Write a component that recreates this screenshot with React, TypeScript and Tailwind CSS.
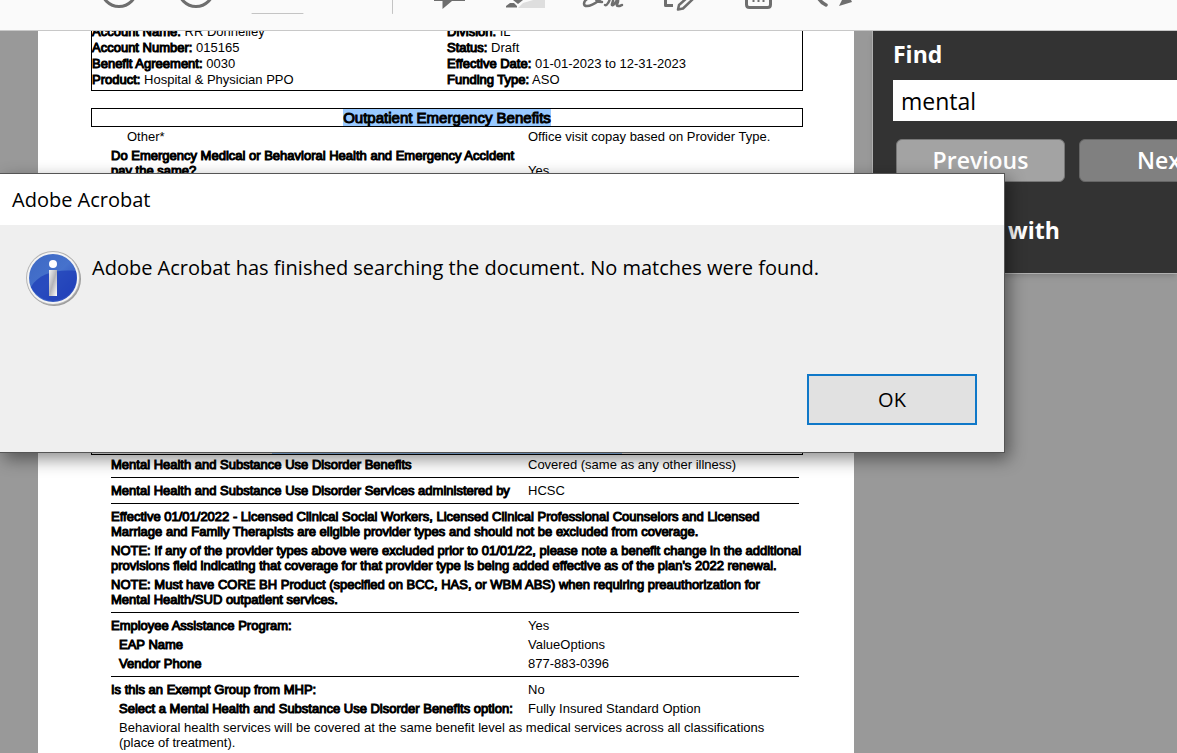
import { ReactNode } from "react";

type RowProps = {
	label: ReactNode;
	value?: string;
	className?: string;
	plain?: boolean;
};

const heavy = "[-webkit-text-stroke:1px_black]";

const accountInfo = [
	{ label: "Account Name:", value: "RR Donnelley" },
	{ label: "Division:", value: "IL" },
	{ label: "Account Number:", value: "015165" },
	{ label: "Status:", value: "Draft" },
	{ label: "Benefit Agreement:", value: "0030" },
	{ label: "Effective Date:", value: "01-01-2023 to 12-31-2023" },
	{ label: "Product:", value: "Hospital & Physician PPO" },
	{ label: "Funding Type:", value: "ASO" },
];

const Row = ({ label, value, className = "", plain = false }: RowProps) => (
	<div className="grid grid-cols-[417px_1fr] items-end">
		<span className={`${className} ${plain ? "" : heavy}`}>{label}</span>
		<span>{value}</span>
	</div>
);

const Group = ({ children }: { children: ReactNode }) => (
	<section className="flex flex-col gap-1 border-b border-black py-[5px]">{children}</section>
);

// lower halves of the toolbar icons, the bar is scrolled under the window edge
const Toolbar = () => (
	<header className="h-[31px] shrink-0 overflow-hidden border-b border-[#c8c8c8] bg-[#fafafa]">
		<svg
			width="900"
			height="30"
			viewBox="0 0 900 30"
			fill="none"
			stroke="#6e6e6e"
			strokeWidth="3"
			strokeLinecap="round"
			strokeLinejoin="round"
		>
			<circle cx="119" cy="-11" r="17.5" />
			<circle cx="196" cy="-11" r="17.5" />
			<path d="M252 13.5h51M392.5 -1v14.5" stroke="#c4c4c4" strokeWidth="1" />
			<g fill="#6e6e6e" stroke="none">
				<path d="M434 0h31v1H452L442.5 9V1H434z" />
				<path d="M506 7.5V6l4-3h4l3 3v1.500zM513 0h10l-5 4z" />
				<path d="M518 8l5-5 10-3h12v8z" fill="#dedede" />
				<path d="M839 6l3-6h9l1 2z" />
			</g>
			<path d="M587 -1C583 2 583 6 587 6C593 6 598 1 601 -1M596 -2c0 4 2 4 6 4M609 -1c2 0-2 7-4 6M613 -1c1 2-3 7 0 6s4-7 5-5-3 6 0 6 3-1 4-1" strokeWidth="2.5" />
			<path d="M665.5 -2V5.500H673" strokeLinecap="butt" />
			<path d="M688 -3L679 5l-1 4.500 5-1L694 -2" strokeWidth="2.5" />
			<path d="M746.500 -2V4.500Q746.500 7.500 749.500 7.500H767.500Q770.500 7.500 770.500 4.500V-2" />
			<path d="M753.500 -1V2M758.500 -1V2M763.500 -1V2" strokeWidth="2" strokeLinecap="butt" />
			<path d="M818 -3Q820 2 826 5" strokeWidth="3.5" />
		</svg>
	</header>
);

const InfoIcon = () => (
	<svg width="56" height="56" viewBox="0 0 56 56" className="shrink-0" aria-hidden="true">
		<defs>
			<linearGradient id="info-fill" x1="0" y1="0" x2="1" y2="1">
				<stop offset="0" stopColor="#3d68c4" />
				<stop offset="0.5" stopColor="#4672cc" />
				<stop offset="1" stopColor="#2440b8" />
			</linearGradient>
			<linearGradient id="info-stem" x1="0" y1="0" x2="1" y2="1">
				<stop offset="0" stopColor="#f4f4f4" />
				<stop offset="0.5" stopColor="#b4b4b8" />
				<stop offset="1" stopColor="#ffffff" />
			</linearGradient>
		</defs>
		<circle cx="28" cy="28" r="27" fill="#9c9c9c" />
		<circle cx="27" cy="27" r="27" fill="#b4b4b4" />
		<circle cx="27" cy="27" r="26" fill="#f4f4f4" />
		<circle cx="27" cy="27" r="24" fill="url(#info-fill)" />
		<path d="M5 36C12 23 30 18 50 20A24 24 0 0 1 5 36z" fill="#1c3cb8" opacity=".7" />
		<circle cx="27" cy="13" r="4" fill="#fff" />
		<rect x="23" y="19" width="8" height="26" fill="url(#info-stem)" />
	</svg>
);

const DocumentPage = () => (
	<article className="min-h-[722px] w-[816px] shrink-0 bg-white px-[53px] font-['Liberation_Sans',Arial,sans-serif] text-[13px] leading-[15px] whitespace-nowrap text-black">
		<div className="-mt-[7px] grid w-[712px] grid-cols-2 border border-t-0 border-black pb-[2px] leading-4">
			{accountInfo.map((item) => (
				<p key={item.label}>
					<span className={heavy}>{item.label}</span> {item.value}
				</p>
			))}
		</div>
		<h2 className="mt-[17px] flex h-[19px] w-[712px] items-center justify-center border border-black text-[15px] leading-[17px]">
			<span className={`bg-[#99c9ff] ${heavy}`}>Outpatient Emergency Benefits</span>
		</h2>
		<div className="flex h-[308px] w-[688px] flex-col gap-1 pt-[2px] pl-5">
			<Row label="Other*" value="Office visit copay based on Provider Type." className="pl-4" plain />
			<Row
				label={
					<>
						Do Emergency Medical or Behavioral Health and Emergency Accident
						<br />
						pay the same?
					</>
				}
				value="Yes"
			/>
		</div>
		<div className="flex h-[20px] w-[712px] justify-center border border-black">
			<span className="w-[350px] bg-[#99c9ff]" />
		</div>
		<div className="-mt-[3px] ml-5 w-[688px]">
			<Group>
				<Row label="Mental Health and Substance Use Disorder Benefits" value="Covered (same as any other illness)" />
			</Group>
			<Group>
				<Row label="Mental Health and Substance Use Disorder Services administered by" value="HCSC" />
			</Group>
			<Group>
				<p className={heavy}>
					Effective 01/01/2022 - Licensed Clinical Social Workers, Licensed Clinical Professional Counselors and Licensed
					<br />
					Marriage and Family Therapists are eligible provider types and should not be excluded from coverage.
				</p>
				<p className={heavy}>
					NOTE: If any of the provider types above were excluded prior to 01/01/22, please note a benefit change in the additional
					<br />
					provisions field indicating that coverage for that provider type is being added effective as of the plan's 2022 renewal.
				</p>
				<p className={heavy}>
					NOTE: Must have CORE BH Product (specified on BCC, HAS, or WBM ABS) when requiring preauthorization for
					<br />
					Mental Health/SUD outpatient services.
				</p>
			</Group>
			<Group>
				<Row label="Employee Assistance Program:" value="Yes" />
				<Row label="EAP Name" value="ValueOptions" className="pl-2" />
				<Row label="Vendor Phone" value="877-883-0396" className="pl-2" />
			</Group>
			<div className="flex flex-col gap-1 pt-[5px]">
				<Row label="Is this an Exempt Group from MHP:" value="No" />
				<Row
					label="Select a Mental Health and Substance Use Disorder Benefits option:"
					value="Fully Insured Standard Option"
					className="pl-2"
				/>
				<p className="pl-2">
					Behavioral health services will be covered at the same benefit level as medical services across all classifications
					<br />
					(place of treatment).
				</p>
			</div>
		</div>
	</article>
);

const FindPanel = () => (
	<aside className="h-[243px] w-[305px] shrink-0 overflow-hidden border-b border-l border-[#b0b0b0] bg-[#333] pl-5 text-white shadow-md">
		<label htmlFor="find" className="block pt-[7px] text-[23px] leading-8 font-bold">
			Find
		</label>
		<input id="find" defaultValue="mental" className="mt-[10px] block h-[41px] w-[400px] bg-white px-2 text-[23px] text-black" />
		<div className="mt-[18px] ml-[3px] flex w-[400px] gap-[14px] text-[23px] font-semibold">
			<button className="h-[43px] w-[169px] shrink-0 rounded-md border border-[#777] bg-[#a3a3a3]">Previous</button>
			<button className="h-[43px] w-[169px] shrink-0 rounded-md border border-[#666] bg-[#808080]">Next</button>
		</div>
		<p className="mt-8 pl-[115px] text-[23px] leading-8 font-bold">with</p>
	</aside>
);

const Dialog = () => (
	<div
		role="dialog"
		aria-labelledby="dialog-title"
		className="absolute top-[173px] right-[172px] left-0 border border-l-0 border-[#555] bg-[#efefef] text-xl text-black shadow-[4px_6px_16px_rgba(0,0,0,0.45)]"
	>
		<h1 id="dialog-title" className="bg-white pt-px pl-3 leading-[50px]">
			Adobe Acrobat
		</h1>
		<div className="flex gap-[10px] pt-[26px] pl-[26px]">
			<InfoIcon />
			<p className="pt-px leading-8">Adobe Acrobat has finished searching the document. No matches were found.</p>
		</div>
		<div className="flex justify-end pt-[67px] pr-[27px] pb-[27px]">
			<button className="h-[51px] w-[170px] border-2 border-[#0f78c8] bg-[#e1e1e1] pt-px">OK</button>
		</div>
	</div>
);

export default function App() {
	return (
		<div className="relative flex h-screen flex-col overflow-hidden bg-[#999] font-['Open_Sans','Segoe_UI',sans-serif]">
			<Toolbar />
			<main className="flex flex-1 items-start justify-between overflow-hidden pl-[38px]">
				<DocumentPage />
				<FindPanel />
			</main>
			<Dialog />
		</div>
	);
}
